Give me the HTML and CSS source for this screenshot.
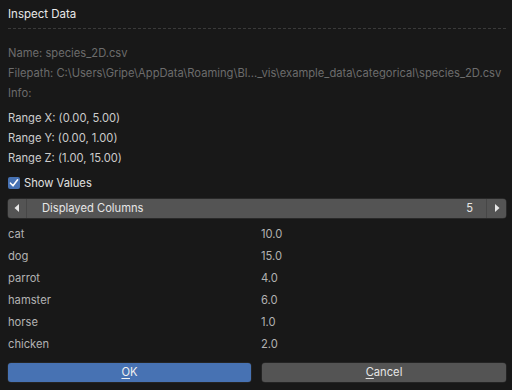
FILE: index.html
```html
<!DOCTYPE html>
<html>
<head>
<meta charset="utf-8">
<link rel="stylesheet" href="styles.css">
</head>
<body>
<div class="dialog">
  <div class="title">Inspect Data</div>
  <div class="sep"></div>
  <div class="info">
    <div class="line dim name">Name: species_2D.csv</div>
    <div class="line dim path">Filepath: C:\Users\Gripe\AppData\Roaming\Bl..._vis\example_data\categorical\species_2D.csv</div>
    <div class="line dim">Info:</div>
  </div>
  <div class="ranges">
    <div class="line">Range X: (0.00, 5.00)</div>
    <div class="line">Range Y: (0.00, 1.00)</div>
    <div class="line">Range Z: (1.00, 15.00)</div>
  </div>
  <label class="check">
    <span class="box"><svg width="10" height="10" viewBox="0 0 10 10"><path d="M1.5 5.2 L4 7.8 L8.6 1.8" fill="none" stroke="#fff" stroke-width="1.6" stroke-linecap="round" stroke-linejoin="round"/></svg></span>
    <span>Show Values</span>
  </label>
  <div class="num">
    <div class="arrow left"><svg width="8" height="10" viewBox="0 0 8 10"><path d="M6 1 L1.5 5 L6 9 Z" fill="#e8e8e8"/></svg></div>
    <div class="numbody"><span class="numlabel">Displayed Columns</span><span class="numval">5</span></div>
    <div class="arrow right"><svg width="8" height="10" viewBox="0 0 8 10"><path d="M2 1 L6.5 5 L2 9 Z" fill="#e8e8e8"/></svg></div>
  </div>
  <div class="table">
    <div class="row"><span>cat</span><span>10.0</span></div>
    <div class="row"><span>dog</span><span>15.0</span></div>
    <div class="row"><span>parrot</span><span>4.0</span></div>
    <div class="row"><span>hamster</span><span>6.0</span></div>
    <div class="row"><span>horse</span><span>1.0</span></div>
    <div class="row"><span>chicken</span><span>2.0</span></div>
  </div>
  <div class="buttons">
    <div class="btn ok"><u>O</u>K</div>
    <div class="btn cancel"><u>C</u>ancel</div>
  </div>
</div>
</body>
</html>
```
FILE: styles.css
```css
html, body {
  margin: 0;
  padding: 0;
  background: #181818;
}
body {
  font-family: Inter, "DejaVu Sans", sans-serif;
  font-size: 11.2px;
  color: #cccccc;
  width: 512px;
  height: 390px;
  overflow: hidden;
}
.dialog {
  padding: 0 6px 0 8px;
  display: flex;
  flex-direction: column;
}
.title {
  height: 28px;
  line-height: 28px;
  color: #e8e8e8;
  font-size: 11.5px;
}
.sep {
  border-top: 1px dashed #3a3a3a;
  height: 0;
}
.info {
  margin-top: 14px;
}
.line {
  height: 21px;
  line-height: 21px;
  white-space: nowrap;
}
.info .name { height: 19px; }
.info .path { height: 21px; line-height: 22px; }
.dim { color: #6c6c6c; }
.ranges {
  margin-top: 4px;
}
.ranges .line { height: 20px; line-height: 20px; }
.check {
  display: flex;
  align-items: center;
  gap: 4px;
  height: 22px;
  margin-top: 3.5px;
  color: #e0e0e0;
}
.box {
  width: 12px;
  height: 12px;
  border-radius: 2px;
  background: #4772b3;
  display: flex;
  align-items: center;
  justify-content: center;
}
.num {
  margin-top: 5px;
  height: 19px;
  display: flex;
  background: #545454;
  border-radius: 3px;
  box-shadow: 0 0 0 0.5px #3a3a3a;
  color: #e6e6e6;
}
.arrow {
  width: 18px;
  display: flex;
  align-items: center;
  justify-content: center;
}
.arrow.left { border-right: 1px solid #474747; }
.arrow.right { border-left: 1px solid #474747; width: 19px; }
.numbody {
  flex: 1;
  display: flex;
  justify-content: space-between;
  align-items: center;
  padding: 0 13px 0 15px;
}
.table {
  margin-top: 5px;
}
.row {
  height: 22px;
  line-height: 22px;
  display: grid;
  grid-template-columns: 253px 1fr;
  color: #b2b2b2;
}
.buttons {
  margin-top: 8px;
  display: grid;
  grid-template-columns: 243px 244px;
  gap: 11px;
}
.btn {
  height: 19px;
  line-height: 19px;
  text-align: center;
  border-radius: 3px;
  color: #f0f0f0;
  box-shadow: 0 0 0 0.5px #303030;
}
.btn u { text-underline-offset: 2px; }
.ok { background: #4772b3; }
.cancel { background: #545454; color: #e6e6e6; }
```
